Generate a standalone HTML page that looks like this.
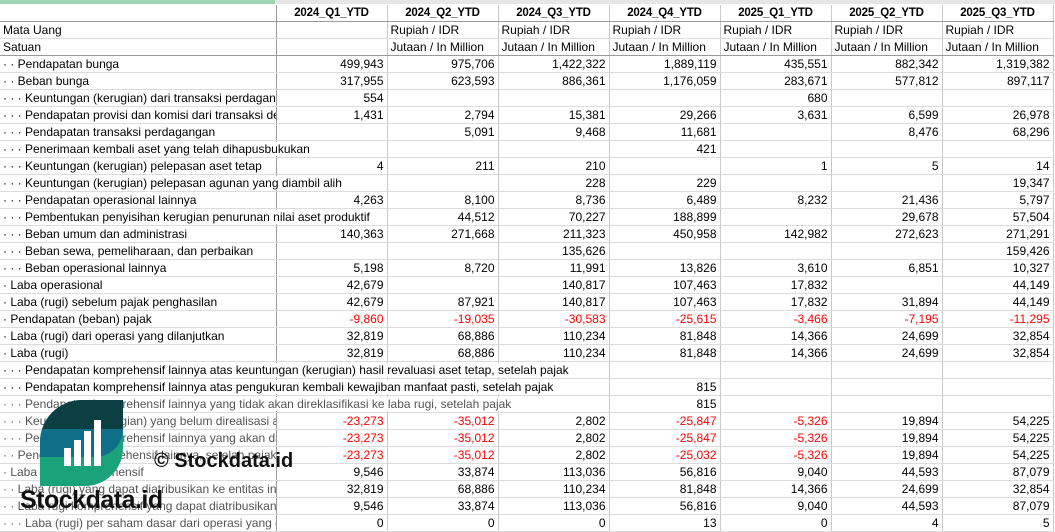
<!DOCTYPE html><html><head><meta charset="utf-8"><style>
body{margin:0;width:1055px;height:532px;overflow:hidden;background:#fff;font-family:"Liberation Sans",Arial,sans-serif;font-size:12px;color:#000;position:relative}
table{border-collapse:collapse;table-layout:fixed;position:absolute;left:0;top:5px;width:1053px}
td{height:16px;padding:0 3px;border-bottom:1px solid #dcdcdc;border-right:1px solid #c8c8c8;white-space:nowrap;overflow:hidden;text-align:right;line-height:16px}
td.l{text-align:left;border-right:1px solid #9a9a9a;overflow:visible;position:relative;z-index:2}
td.l span{background:#fff;padding-right:2px}
td.l.c{overflow:hidden}
tr.h td{font-weight:bold;text-align:center;border-bottom:1px solid #9a9a9a;font-size:11.5px;letter-spacing:-0.2px}
tr.s td{border-bottom:1px solid #9a9a9a}
td.u{text-align:left}
.r{color:#f00}
tr.g td.l{color:#555}
.wm{position:absolute;z-index:5}
</style></head><body>
<div style="position:absolute;left:0;top:0;width:275px;height:4px;background:#9fd5b3"></div>
<div style="position:absolute;left:276px;top:0;width:779px;height:4px;background:#e6e6e6"></div>
<table>
<colgroup><col style="width:276px"><col style="width:111px"><col style="width:111px"><col style="width:111px"><col style="width:111px"><col style="width:111px"><col style="width:111px"><col style="width:111px"></colgroup>
<tr class="h"><td class="l"></td><td>2024_Q1_YTD</td><td>2024_Q2_YTD</td><td>2024_Q3_YTD</td><td>2024_Q4_YTD</td><td>2025_Q1_YTD</td><td>2025_Q2_YTD</td><td>2025_Q3_YTD</td></tr>
<tr><td class="l">Mata Uang</td><td></td><td class="u">Rupiah / IDR</td><td class="u">Rupiah / IDR</td><td class="u">Rupiah / IDR</td><td class="u">Rupiah / IDR</td><td class="u">Rupiah / IDR</td><td class="u">Rupiah / IDR</td></tr>
<tr class="s"><td class="l">Satuan</td><td></td><td class="u">Jutaan / In Million</td><td class="u">Jutaan / In Million</td><td class="u">Jutaan / In Million</td><td class="u">Jutaan / In Million</td><td class="u">Jutaan / In Million</td><td class="u">Jutaan / In Million</td></tr>
<tr><td class="l">· · Pendapatan bunga</td><td>499,943</td><td>975,706</td><td>1,422,322</td><td>1,889,119</td><td>435,551</td><td>882,342</td><td>1,319,382</td></tr>
<tr><td class="l">· · Beban bunga</td><td>317,955</td><td>623,593</td><td>886,361</td><td>1,176,059</td><td>283,671</td><td>577,812</td><td>897,117</td></tr>
<tr><td class="l c">· · · Keuntungan (kerugian) dari transaksi perdagangan</td><td>554</td><td></td><td></td><td></td><td>680</td><td></td><td></td></tr>
<tr><td class="l c">· · · Pendapatan provisi dan komisi dari transaksi dengan pihak</td><td>1,431</td><td>2,794</td><td>15,381</td><td>29,266</td><td>3,631</td><td>6,599</td><td>26,978</td></tr>
<tr><td class="l"><span>· · · Pendapatan transaksi perdagangan</span></td><td></td><td>5,091</td><td>9,468</td><td>11,681</td><td></td><td>8,476</td><td>68,296</td></tr>
<tr><td class="l"><span>· · · Penerimaan kembali aset yang telah dihapusbukukan</span></td><td></td><td></td><td></td><td>421</td><td></td><td></td><td></td></tr>
<tr><td class="l c">· · · Keuntungan (kerugian) pelepasan aset tetap</td><td>4</td><td>211</td><td>210</td><td></td><td>1</td><td>5</td><td>14</td></tr>
<tr><td class="l"><span>· · · Keuntungan (kerugian) pelepasan agunan yang diambil alih</span></td><td></td><td></td><td>228</td><td>229</td><td></td><td></td><td>19,347</td></tr>
<tr><td class="l c">· · · Pendapatan operasional lainnya</td><td>4,263</td><td>8,100</td><td>8,736</td><td>6,489</td><td>8,232</td><td>21,436</td><td>5,797</td></tr>
<tr><td class="l"><span>· · · Pembentukan penyisihan kerugian penurunan nilai aset produktif</span></td><td></td><td>44,512</td><td>70,227</td><td>188,899</td><td></td><td>29,678</td><td>57,504</td></tr>
<tr><td class="l c">· · · Beban umum dan administrasi</td><td>140,363</td><td>271,668</td><td>211,323</td><td>450,958</td><td>142,982</td><td>272,623</td><td>271,291</td></tr>
<tr><td class="l"><span>· · · Beban sewa, pemeliharaan, dan perbaikan</span></td><td></td><td></td><td>135,626</td><td></td><td></td><td></td><td>159,426</td></tr>
<tr><td class="l c">· · · Beban operasional lainnya</td><td>5,198</td><td>8,720</td><td>11,991</td><td>13,826</td><td>3,610</td><td>6,851</td><td>10,327</td></tr>
<tr><td class="l c">· Laba operasional</td><td>42,679</td><td></td><td>140,817</td><td>107,463</td><td>17,832</td><td></td><td>44,149</td></tr>
<tr><td class="l c">· Laba (rugi) sebelum pajak penghasilan</td><td>42,679</td><td>87,921</td><td>140,817</td><td>107,463</td><td>17,832</td><td>31,894</td><td>44,149</td></tr>
<tr><td class="l c">· Pendapatan (beban) pajak</td><td class="r">-9,860</td><td class="r">-19,035</td><td class="r">-30,583</td><td class="r">-25,615</td><td class="r">-3,466</td><td class="r">-7,195</td><td class="r">-11,295</td></tr>
<tr><td class="l c">· Laba (rugi) dari operasi yang dilanjutkan</td><td>32,819</td><td>68,886</td><td>110,234</td><td>81,848</td><td>14,366</td><td>24,699</td><td>32,854</td></tr>
<tr><td class="l c">· Laba (rugi)</td><td>32,819</td><td>68,886</td><td>110,234</td><td>81,848</td><td>14,366</td><td>24,699</td><td>32,854</td></tr>
<tr><td class="l"><span>· · · Pendapatan komprehensif lainnya atas keuntungan (kerugian) hasil revaluasi aset tetap, setelah pajak</span></td><td></td><td></td><td></td><td></td><td></td><td></td><td></td></tr>
<tr><td class="l"><span>· · · Pendapatan komprehensif lainnya atas pengukuran kembali kewajiban manfaat pasti, setelah pajak</span></td><td></td><td></td><td></td><td>815</td><td></td><td></td><td></td></tr>
<tr class="g"><td class="l"><span>· · · Pendapatan komprehensif lainnya yang tidak akan direklasifikasi ke laba rugi, setelah pajak</span></td><td></td><td></td><td></td><td>815</td><td></td><td></td><td></td></tr>
<tr class="g"><td class="l c">· · · Keuntungan (kerugian) yang belum direalisasi atas</td><td class="r">-23,273</td><td class="r">-35,012</td><td>2,802</td><td class="r">-25,847</td><td class="r">-5,326</td><td>19,894</td><td>54,225</td></tr>
<tr class="g"><td class="l c">· · · Pendapatan komprehensif lainnya yang akan direklasifikasi</td><td class="r">-23,273</td><td class="r">-35,012</td><td>2,802</td><td class="r">-25,847</td><td class="r">-5,326</td><td>19,894</td><td>54,225</td></tr>
<tr class="g"><td class="l c">· · Pendapatan komprehensif lainnya, setelah pajak</td><td class="r">-23,273</td><td class="r">-35,012</td><td>2,802</td><td class="r">-25,032</td><td class="r">-5,326</td><td>19,894</td><td>54,225</td></tr>
<tr class="g"><td class="l c">· Laba (rugi) komprehensif</td><td>9,546</td><td>33,874</td><td>113,036</td><td>56,816</td><td>9,040</td><td>44,593</td><td>87,079</td></tr>
<tr class="g"><td class="l c">· · Laba (rugi) yang dapat diatribusikan ke entitas induk</td><td>32,819</td><td>68,886</td><td>110,234</td><td>81,848</td><td>14,366</td><td>24,699</td><td>32,854</td></tr>
<tr class="g"><td class="l c">· · Laba rugi komprehensif yang dapat diatribusikan ke entitas</td><td>9,546</td><td>33,874</td><td>113,036</td><td>56,816</td><td>9,040</td><td>44,593</td><td>87,079</td></tr>
<tr class="g"><td class="l c">· · · Laba (rugi) per saham dasar dari operasi yang dilanjutkan</td><td>0</td><td>0</td><td>0</td><td>13</td><td>0</td><td>4</td><td>5</td></tr>
</table>
<div class="wm" style="left:40px;top:400px;width:83px;height:86px;border-radius:42px 0 38px 0;overflow:hidden;background:#1aa37a">
<div style="height:29px;background:#0b3f41"></div>
<div style="height:28px;background:#0f6f88;border-radius:0 0 30px 0"></div>
<div style="position:absolute;left:24px;top:48px;width:7px;height:18px;background:#fff"></div>
<div style="position:absolute;left:34px;top:40px;width:7px;height:26px;background:#fff"></div>
<div style="position:absolute;left:44px;top:31px;width:7px;height:35px;background:#fff"></div>
<div style="position:absolute;left:54px;top:20px;width:7px;height:46px;background:#fff"></div>
</div>
<div class="wm" style="left:154px;top:449px;font-size:20px;font-weight:bold;color:#111;line-height:24px">© Stockdata.id</div>
<div class="wm" style="left:20px;top:485px;font-size:25px;font-weight:bold;color:#111;line-height:30px;letter-spacing:-0.5px">Stockdata.id</div>
</body></html>
